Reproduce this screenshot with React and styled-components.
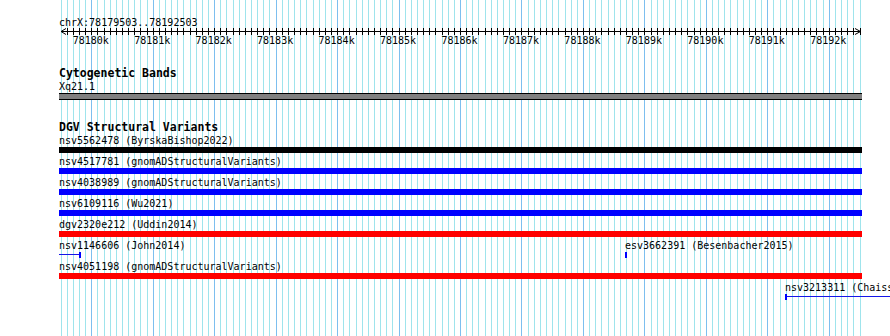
import React from 'react';
import styled, {createGlobalStyle} from "styled-components";

const START = 78179503;
const END = 78192503;
const LEFT = 61.2;
const SCALE = 799 / 13000;
const VIEW_LEFT = 59;

// page x of a base position
const px = (bp) => LEFT + (bp - START) * SCALE;

const GlobalStyle = createGlobalStyle`
    html, body {
        margin: 0;
        padding: 0;
        background: #fff;
        overflow: hidden;
    }
    body {
        width: 890px;
        height: 336px;
        font-family: "DejaVu Sans Mono", "Liberation Mono", monospace;
        font-size: 10px;
        color: #000;
    }
`;

const Page = styled.div`
    position: relative;
    width: 890px;
    height: 336px;
    overflow: hidden;
    padding-top: 17px;
    box-sizing: border-box;
`;

const GridLayer = styled.svg`
    position: absolute;
    left: 0;
    top: 0;
    width: 890px;
    height: 336px;
    z-index: 0;
`;

const View = styled.div`
    position: relative;
    z-index: 1;
    margin-left: ${VIEW_LEFT}px;
    width: 803px;
`;

const Location = styled.div`
    line-height: 11px;
    height: 11px;
    white-space: nowrap;
`;

const RulerSvg = styled.svg`
    display: block;
    width: 803px;
    height: 20px;
    overflow: visible;
    font-family: "DejaVu Sans Mono", "Liberation Mono", monospace;
    font-size: 10px;
`;

const Track = styled.div`
    margin-top: ${(p) => p.$gap}px;
    display: flex;
    flex-direction: column;
`;

const TrackTitle = styled.div`
    font-weight: bold;
    font-size: 11.5px;
    line-height: 13px;
    height: 13px;
    white-space: nowrap;
`;

const Rows = styled.div`
    display: flex;
    flex-direction: column;
    gap: 2px;
`;

const FeatureRow = styled.div`
    display: flex;
    flex-direction: column;
`;

const FeatureLabel = styled.div`
    line-height: 13px;
    height: 13px;
    white-space: nowrap;
`;

const Band = styled.div`
    height: 5px;
    background: #808080;
    border-top: 1px solid #000;
    border-bottom: 1px solid #000;
`;

const Bar = styled.div`
    height: 6px;
    background: ${(p) => p.$color};
`;

const PlacedRow = styled.div`
    position: relative;
    height: 19px;
`;

const PlacedFeature = styled.div`
    position: absolute;
    top: 0;
    display: flex;
    flex-direction: column;
`;

const Glyph = styled.div`
    position: relative;
    height: 6px;
`;

const Stem = styled.div`
    position: absolute;
    left: 0;
    right: 0;
    top: 2px;
    height: 1px;
    background: #1515e8;
`;

const Cap = styled.div`
    position: absolute;
    top: 0;
    width: 2px;
    height: 6px;
    background: #0000ff;
    ${(p) => (p.$side === 'right' ? 'right: 0;' : 'left: 0;')}
`;

const gridTicks = [];
for (let bp = 78179500; bp <= 78192500; bp += 100) {
    gridTicks.push(bp);
}

const Grid = () => (
    <GridLayer viewBox="0 0 890 336">
        {gridTicks.map((bp) => {
            const major = bp % 1000 === 0;
            return (
                <rect key={bp} x={Math.round(px(bp) - 0.5)} y={0} width={1} height={336}
                      fill={major ? "#7dbfef" : "#9fe4ec"}/>
            );
        })}
    </GridLayer>
);

const Ruler = () => {
    const o = (x) => x - VIEW_LEFT;
    return (
        <RulerSvg>
            <rect x={o(61)} y={3} width={799} height={1} fill="#000"/>
            {gridTicks.filter((bp) => bp > START && bp < END).map((bp) => (
                <rect key={bp} x={Math.round(o(px(bp)) - 0.5)} y={0} width={1} height={7} fill="#000"/>
            ))}
            <polyline points={`${o(66)},0.5 ${o(61)},3.5 ${o(66)},6.5`} fill="none" stroke="#000" strokeWidth="1"/>
            <polyline points={`${o(855)},0.5 ${o(860.5)},3.5 ${o(855)},6.5`} fill="none" stroke="#000" strokeWidth="1"/>
            {gridTicks.filter((bp) => bp % 1000 === 0 && bp > START).map((bp) => (
                <text key={bp} x={o(px(bp)) - 1} y={15.5} textAnchor="middle" fill="#000">
                    {bp / 1000}k
                </text>
            ))}
        </RulerSvg>
    );
};

const fullRows = [
    {name: "nsv5562478", source: "ByrskaBishop2022", color: "#000000"},
    {name: "nsv4517781", source: "gnomADStructuralVariants", color: "#0000ff"},
    {name: "nsv4038989", source: "gnomADStructuralVariants", color: "#0000ff"},
    {name: "nsv6109116", source: "Wu2021", color: "#0000ff"},
    {name: "dgv2320e212", source: "Uddin2014", color: "#ff0000"},
];

const Placed = ({left, width, label, cap, solid}) => (
    <PlacedFeature style={{left: left - VIEW_LEFT, width}}>
        <FeatureLabel>{label}</FeatureLabel>
        <Glyph>
            {!solid && <Stem/>}
            <Cap $side={cap}/>
        </Glyph>
    </PlacedFeature>
);

const App = () => {
    return (
        <Page>
            <GlobalStyle/>
            <Grid/>
            <View>
                <Location>chrX:78179503..78192503</Location>
                <Ruler/>
                <Track $gap={19}>
                    <TrackTitle>Cytogenetic Bands</TrackTitle>
                    <FeatureRow>
                        <FeatureLabel>Xq21.1</FeatureLabel>
                        <Band/>
                    </FeatureRow>
                </Track>
                <Track $gap={21}>
                    <TrackTitle>DGV Structural Variants</TrackTitle>
                    <Rows>
                        {fullRows.map((r) => (
                            <FeatureRow key={r.name}>
                                <FeatureLabel>{r.name} ({r.source})</FeatureLabel>
                                <Bar $color={r.color}/>
                            </FeatureRow>
                        ))}
                        <PlacedRow>
                            <Placed left={59} width={21.7} label="nsv1146606 (John2014)" cap="right"/>
                            <Placed left={625} width={2} label="esv3662391 (Besenbacher2015)" cap="left" solid/>
                        </PlacedRow>
                        <FeatureRow>
                            <FeatureLabel>nsv4051198 (gnomADStructuralVariants)</FeatureLabel>
                            <Bar $color="#ff0000"/>
                        </FeatureRow>
                        <PlacedRow>
                            <Placed left={785} width={200} label="nsv3213311 (Chaisson2019)" cap="left"/>
                        </PlacedRow>
                    </Rows>
                </Track>
            </View>
        </Page>
    );
};

export default App;
